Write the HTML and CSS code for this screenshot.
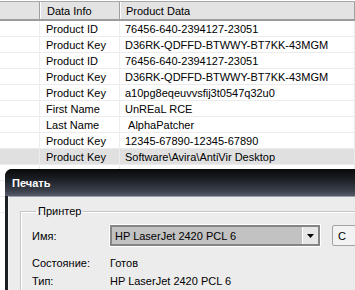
FILE: index.html
```html
<!DOCTYPE html>
<html lang="en">
<head>
    <meta charset="UTF-8">
    <title>Product Data</title>
    <link rel="stylesheet" href="styles.css">
</head>
<body>
    <main class="listview">
        <div class="row head">
            <div class="cell"></div>
            <div class="cell">Data Info</div>
            <div class="cell">Product Data</div>
        </div>
        <div class="row"><div class="cell"></div><div class="cell">Product ID</div><div class="cell">76456-640-2394127-23051</div></div>
        <div class="row"><div class="cell"></div><div class="cell">Product Key</div><div class="cell">D36RK-QDFFD-BTWWY-BT7KK-43MGM</div></div>
        <div class="row"><div class="cell"></div><div class="cell">Product ID</div><div class="cell">76456-640-2394127-23051</div></div>
        <div class="row"><div class="cell"></div><div class="cell">Product Key</div><div class="cell">D36RK-QDFFD-BTWWY-BT7KK-43MGM</div></div>
        <div class="row"><div class="cell"></div><div class="cell">Product Key</div><div class="cell">a10pg8eqeuvvsfij3t0547q32u0</div></div>
        <div class="row"><div class="cell"></div><div class="cell">First Name</div><div class="cell">UnREaL RCE</div></div>
        <div class="row"><div class="cell"></div><div class="cell">Last Name</div><div class="cell">&nbsp;AlphaPatcher</div></div>
        <div class="row"><div class="cell"></div><div class="cell">Product Key</div><div class="cell">12345-67890-12345-67890</div></div>
        <div class="row selected"><div class="cell"></div><div class="cell">Product Key</div><div class="cell">Software\Avira\AntiVir Desktop</div></div>
        <div class="row"><div class="cell"></div><div class="cell"></div><div class="cell"></div></div>
        <div class="row"><div class="cell"></div><div class="cell"></div><div class="cell"></div></div>
        <div class="row"><div class="cell"></div><div class="cell"></div><div class="cell"></div></div>
    </main>

    <section class="dialog">
        <div class="titlebar">Печать</div>
        <div class="dialog-body">
            <fieldset class="group">
                <legend>Принтер</legend>
                <div class="field">
                    <span class="field-label">Имя:</span>
                    <div class="select">
                        <span class="select-value">HP LaserJet 2420 PCL 6</span>
                        <span class="select-btn">
                            <svg width="7" height="4" viewBox="0 0 7 4"><path d="M0 0h7L3.5 4z" fill="#000"/></svg>
                        </span>
                    </div>
                    <button class="btn">С</button>
                </div>
                <div class="field info">
                    <span class="field-label">Состояние:</span>
                    <span>Готов</span>
                </div>
                <div class="field info">
                    <span class="field-label">Тип:</span>
                    <span>HP LaserJet 2420 PCL 6</span>
                </div>
            </fieldset>
        </div>
    </section>
</body>
</html>
```

FILE: styles.css
```css
html, body {
    margin: 0;
    height: 100%;
    overflow: hidden;
    background: #fff;
    font-family: 'Liberation Sans', Arial, sans-serif;
    font-size: 11px;
    color: #000;
}
.listview {
    display: flex;
    flex-direction: column;
    padding-top: 1px;
}
.row {
    display: grid;
    grid-template-columns: 40px 80px 1fr;
    height: 15px;
    border-bottom: 1px solid #ececec;
}
.row .cell {
    display: flex;
    align-items: center;
    padding-left: 6px;
    border-right: 1px solid #ececec;
    white-space: nowrap;
    overflow: hidden;
}
.row .cell:last-child {
    padding-left: 5px;
}
.row.head {
    height: 17px;
    background: #e3e3e3;
    border-top: 1px solid #a8a8a8;
    border-bottom: 2px solid #9c9c9c;
}
.row.head .cell {
    border-right: 1px solid #a0a0a0;
    border-left: 1px solid #fff;
}
.row.head .cell:first-child {
    border-left: 0;
}
.row.selected {
    background: #e0e0e0;
}

/* print dialog on top */
.dialog {
    position: absolute;
    left: 5px;
    top: 169px;
    width: 370px;
    height: 140px;
    border-radius: 7px 7px 0 0;
    background: #1c1f24;
    overflow: hidden;
}
.titlebar {
    height: 27px;
    display: flex;
    align-items: center;
    padding-left: 7px;
    color: #fff;
    font-weight: bold;
    font-size: 11px;
    background: linear-gradient(#08090b 0%, #1a1d22 35%, #3a3f4a 80%, #565c68 100%);
}
.dialog-body {
    margin-left: 3px;
    border-top: 1px solid #9aa0aa;
    border-left: 1px solid #f4f4f4;
    background: #ececec;
    height: 100%;
    padding: 8px 0 0 11px;
}
.group {
    margin: 0;
    padding: 8px 0 0 11px;
    border: 1px solid #c6c6c6;
    box-shadow: inset 1px 1px 0 #fff;
    border-right: 0;
    border-bottom: 0;
    height: 120px;
}
.group legend {
    padding: 0 2px;
    margin-left: 4px;
    font-size: 11px;
}
.field {
    display: flex;
    align-items: center;
    height: 21px;
}
.field.info {
    height: 18px;
}
.field + .field.info {
    margin-top: 8px;
}
.field.info + .field.info {
    margin-top: 0;
}
.field-label {
    width: 78px;
    flex: none;
}
.select {
    display: flex;
    align-items: center;
    width: 206px;
    height: 17px;
    border: 2px solid #858585;
    box-shadow: 0 0 0 1px #fff;
    background: #c2c2c2;
    flex: none;
}
.select-value {
    flex: 1;
    padding-left: 3px;
}
.select-btn {
    width: 15px;
    height: 17px;
    display: flex;
    align-items: center;
    justify-content: center;
    background: #e6e6e6;
    border-left: 1px solid #fff;
}
.btn {
    margin-left: 12px;
    height: 21px;
    width: 80px;
    flex: none;
    padding: 0 0 0 5px;
    text-align: left;
    font-family: inherit;
    font-size: 11px;
    background: #f2f2f2;
    border: 1px solid #a4a4a4;
    border-radius: 2px;
}
```
